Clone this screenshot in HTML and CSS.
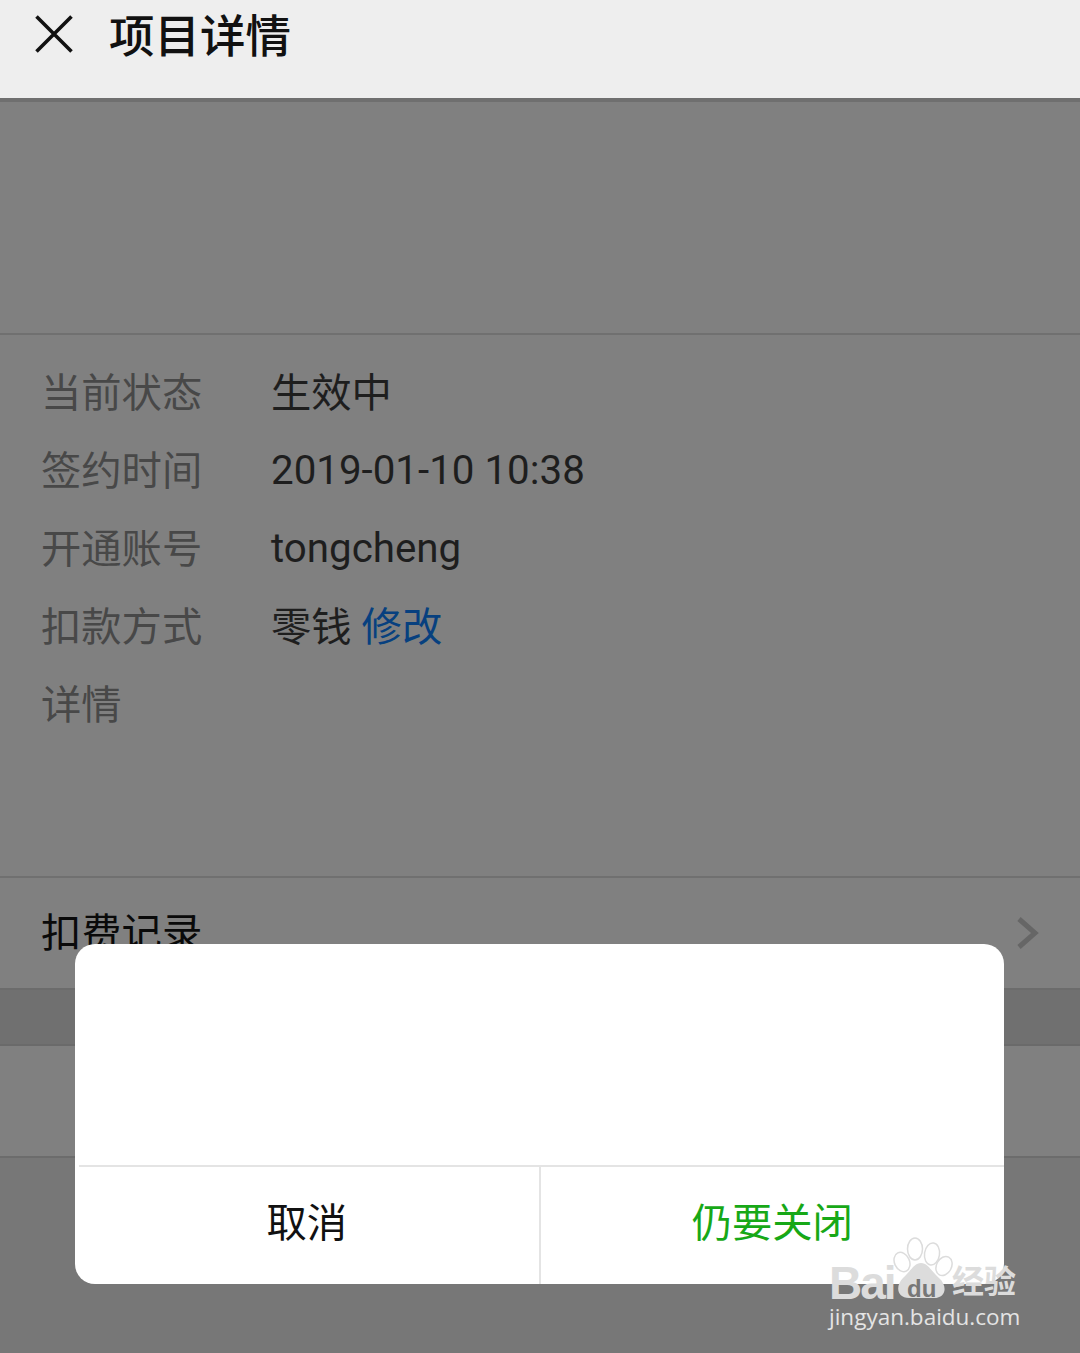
FILE: index.html
```html
<!DOCTYPE html>
<html>
<head>
  <meta charset="utf-8">
  <link rel="stylesheet" href="styles.css">
  <title>项目详情</title>
</head>
<body>
  <div class="page">
    <header class="topbar">
      <svg class="close" width="38" height="38" viewBox="0 0 38 38"><path d="M1.5 1.5 L36.5 36.5 M36.5 1.5 L1.5 36.5" stroke="#111" stroke-width="3.6" fill="none"/></svg>
      <h1>项目详情</h1>
    </header>

    <div class="banner"></div>

    <section class="info">
      <div class="row"><span class="label">当前状态</span><span class="value">生效中</span></div>
      <div class="row"><span class="label">签约时间</span><span class="value latin">2019-01-10 10:38</span></div>
      <div class="row"><span class="label">开通账号</span><span class="value latin">tongcheng</span></div>
      <div class="row"><span class="label">扣款方式</span><span class="value">零钱 <a class="link">修改</a></span></div>
      <div class="row"><span class="label">详情</span></div>
    </section>

    <div class="record">
      <span class="record-title">扣费记录</span>
      <svg width="24" height="34" viewBox="0 0 24 34"><path d="M3 3 L19 17 L3 31" stroke="#666" stroke-width="5" fill="none"/></svg>
    </div>
    <div class="band"></div>
    <div class="empty-row"></div>
    <div class="rest"></div>

    <div class="dialog">
      <div class="dialog-body"></div>
      <div class="dialog-actions">
        <div class="btn">取消</div>
        <div class="btn btn-ok">仍要关闭</div>
      </div>
    </div>

    <div class="watermark">
      <svg class="paw" width="64" height="66" viewBox="0 0 64 66">
        <g fill="none" stroke="#dcdcdc" stroke-width="1.5">
          <ellipse cx="12" cy="26" rx="7.5" ry="10" transform="rotate(-25 12 26)"/>
          <ellipse cx="25" cy="13" rx="7.5" ry="11"/>
          <ellipse cx="42" cy="18" rx="7.5" ry="11" transform="rotate(8 42 18)"/>
          <ellipse cx="54" cy="30" rx="7.5" ry="10" transform="rotate(28 54 30)"/>
        </g>
        <path d="M31 27 C38 27 42 36 49 42 C58 50 56 62 44 62 C38 62 25 62 19 62 C7 62 5 50 13 42 C20 36 24 27 31 27 Z" fill="#dcdcdc"/>
      </svg>
      <span class="wm-bai">Bai</span>
      <span class="wm-du">du</span>
      <span class="wm-jy">经验</span>
      <span class="wm-url">jingyan.baidu.com</span>
    </div>
  </div>
</body>
</html>
```

FILE: styles.css
```css
* {
  box-sizing: border-box;
}

html, body {
  margin: 0;
  padding: 0;
}

body {
  font-family: "Roboto", "Noto Sans CJK SC", sans-serif;
  background-color: #777;
}

.page {
  position: relative;
  width: 1080px;
  height: 1353px;
  overflow: hidden;
  display: flex;
  flex-direction: column;
}

.topbar {
  height: 102px;
  background-color: #eeeeee;
  border-bottom: 4px solid #6f6f6f;
  display: flex;
  align-items: flex-start;
  padding: 15px 0 0 35px;
}

.topbar h1 {
  margin: -5px 0 0 36px;
  font-size: 45.5px;
  line-height: 56px;
  font-weight: 500;
  color: #111;
}

.banner {
  height: 233px;
  background-color: #808080;
  border-bottom: 2px solid #707070;
}

.info {
  height: 543px;
  background-color: #808080;
  border-bottom: 2px solid #707070;
  padding: 15px 0 0 41px;
}

.row {
  display: flex;
  height: 78px;
  align-items: center;
  font-size: 40.3px;
}

.label {
  width: 230px;
  color: #484848;
}

.value {
  color: #1e1e1e;
}

.latin {
  margin-top: 6px;
}

.link {
  color: #07407f;
}

.record {
  height: 112px;
  background-color: #808080;
  border-bottom: 2px solid #6c6c6c;
  display: flex;
  align-items: center;
  justify-content: space-between;
  padding: 0 40px 0 41px;
  font-size: 40.3px;
  color: #0a0a0a;
}

.record-title {
  margin-bottom: 8px;
}

.band {
  height: 56px;
  background-color: #707070;
  border-bottom: 2px solid #6a6a6a;
}

.empty-row {
  height: 112px;
  background-color: #808080;
  border-bottom: 2px solid #6c6c6c;
}

.rest {
  flex: 1;
  background-color: #777;
}

.dialog {
  position: absolute;
  left: 75px;
  top: 944px;
  width: 929px;
  height: 340px;
  background-color: #fff;
  border-radius: 20px;
  display: flex;
  flex-direction: column;
}

.dialog-body {
  height: 223px;
  margin-left: 4px;
  border-bottom: 2px solid #e4e4e4;
}

.dialog-actions {
  flex: 1;
  display: flex;
}

.btn {
  flex: 1;
  display: flex;
  align-items: center;
  justify-content: center;
  padding-bottom: 12px;
  font-size: 40.3px;
  color: #111;
}

.btn-ok {
  color: #17a817;
  border-left: 2px solid #e4e4e4;
}

/* watermark sits over the dialog corner */
.watermark {
  position: absolute;
  left: 828px;
  top: 1236px;
  width: 200px;
  height: 100px;
  color: #dcdcdc;
}

.paw {
  position: absolute;
  left: 62px;
  top: 0;
}

.wm-bai {
  position: absolute;
  left: 1px;
  top: 27px;
  font-family: "Liberation Sans", sans-serif;
  font-size: 46px;
  line-height: 40px;
  font-weight: 700;
  letter-spacing: -2px;
}

.wm-du {
  position: absolute;
  left: 79px;
  top: 41px;
  font-family: "Liberation Sans", sans-serif;
  font-size: 24px;
  line-height: 24px;
  font-weight: 700;
  color: #777;
}

.wm-jy {
  position: absolute;
  left: 124px;
  top: 26px;
  font-size: 32px;
  line-height: 40px;
  font-weight: 700;
}

.wm-url {
  position: absolute;
  left: 1px;
  top: 70px;
  font-family: "Open Sans", sans-serif;
  font-size: 22.5px;
  line-height: 22px;
  white-space: nowrap;
  color: #e4e4e4;
}
```
